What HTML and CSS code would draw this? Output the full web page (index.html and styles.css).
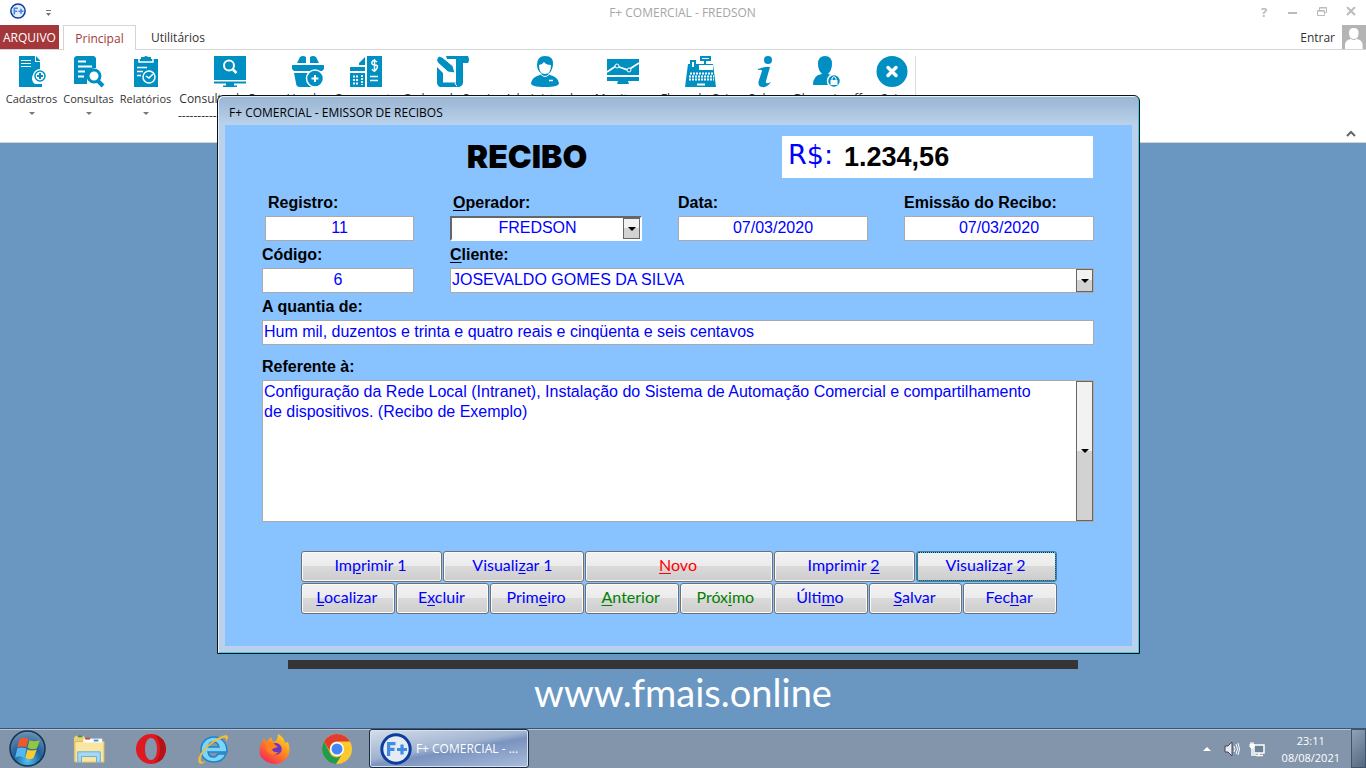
FILE: index.html
```html
<!DOCTYPE html>
<html lang="pt-BR">
<head>
<meta charset="utf-8">
<title>F+ COMERCIAL - FREDSON</title>
<link rel="stylesheet" href="styles.css">
</head>
<body>
<svg class="defs" aria-hidden="true">
  <symbol id="logo" viewBox="0 0 32 32">
    <circle cx="16" cy="16" r="14.2" fill="#e4ebf5" stroke="#0c3c9c" stroke-width="3"/>
    <g stroke="#3f8be6" fill="none" stroke-width="3.2"><path d="M8.6 23V9M7 10.6h8.5M7 16.4h7.5"/><path d="M17 16.5h10M22 11.5v10"/></g>
  </symbol>
</svg>
<header class="titlebar">
  <svg class="app-logo"><use href="#logo"/></svg>
  <svg class="quick" viewBox="0 0 7 8"><path d="M1 1.5h5" stroke="#777"/><path d="M1 4h5L3.500 7z" fill="#777"/></svg>
  <h1 class="app-title">F+ COMERCIAL - FREDSON</h1>
  <div class="win-controls">
    <button aria-label="Ajuda">?</button>
    <button aria-label="Minimizar"><svg viewBox="0 0 10 10"><path d="M0 6h9" stroke="#bbb" stroke-width="2"/></svg></button>
    <button aria-label="Restaurar"><svg viewBox="0 0 10 10" fill="none" stroke="#bbb"><path d="M.5 3.500h7v5h-7zM.5 4.200h7M2.500 3V.5h7v5H8M2.500 1h7"/></svg></button>
    <button aria-label="Fechar janela"><svg viewBox="0 0 10 10"><path d="M1 0l8 8M9 0L1 8" stroke="#bbb" stroke-width="2"/></svg></button>
  </div>
</header>
<nav class="tabs">
  <button class="tab file">ARQUIVO</button>
  <button class="tab current">Principal</button>
  <button class="tab">Utilitários</button>
  <button class="signin">Entrar<svg viewBox="0 0 24 24"><path d="M0 0h24v24H0z" fill="#b4b4b4"/><path d="M3 24v-4q0-5 6-6-2-3-2-6 0-5 4.800-5T16.600 8q0 3-2 6 6 1 6 6v4z" fill="#fff"/><path d="M9 13.500q3 2.500 5.600 0" fill="none" stroke="#b4b4b4"/></svg></button>
</nav>
<div class="ribbon">
  <button class="tool menu"><svg viewBox="0 0 32 32"><path d="M3 0h16v6h5v8.500a8 8 0 0 0-8 9q1 4 4 5h5V31H3z"/><path d="M20 0l4.500 5H20z"/><path d="M5 4.500h10M5 7.500h10M5 10.500h10" stroke="#fff"/><circle cx="24" cy="20" r="7" fill="#fff"/><circle cx="24" cy="20" r="5" fill="#fff" stroke="#008fc3" stroke-width="1.500"/><path d="M24 17v6M21 20h6" stroke="#008fc3" stroke-width="2"/><path d="M3 28h23v3H3z"/></svg>Cadastros</button>
  <button class="tool menu"><svg viewBox="0 0 32 32"><path d="M3 0h18l2 2v10a9 9 0 0 0-9 8v8H1V2z" /><path d="M5 5.500h8M5 10.500h14M5 15.500h7M5 20.500h6" stroke="#fff" stroke-width="2"/><circle cx="21" cy="20" r="6" fill="#fff" stroke="#008fc3" stroke-width="3"/><path d="M25 25l5 5" stroke="#008fc3" stroke-width="4"/></svg>Consultas</button>
  <button class="tool menu"><svg viewBox="0 0 32 32"><path d="M4 3h7V1h3a3 3 0 0 1 4 0h3v2h7v28H4z"/><path d="M9 3v3h14V3M7 11.500h10M7 15.500h6M7 19.500h4" stroke="#fff" stroke-width="1.500" fill="none"/><circle cx="19" cy="21" r="6" stroke="#fff" stroke-width="1.500"/><path d="M16 20l3 2 4-4" stroke="#fff" stroke-width="1.500" fill="none"/></svg>Relatórios</button>
  <button class="tool w-search"><svg viewBox="0 0 32 32"><path d="M0 0h32v24H0zM0 25.500h32v2H20v2h3V31H9v-1.500h3v-2H0z"/><path d="M0 24.500h32" stroke="#fff"/><circle cx="15" cy="9.500" r="5" fill="none" stroke="#fff" stroke-width="2"/><path d="M18.500 13l4 4" stroke="#fff" stroke-width="2.500"/></svg>Consulta de Preço</button>
  <button class="tool w-sale"><svg viewBox="0 0 32 32"><path d="M5 7l3-6q3-2 6 0v6zM18 7V1q3-2 6 0l3 6zM0 9h32v4l-2 2H2l-2-2zM2 17h27l-2 14H8q-4 0-4-4z"/><circle cx="23" cy="22.500" r="8.500" stroke="#fff" stroke-width="1.500"/><path d="M23 19v7M19.500 22.500h7" stroke="#fff" stroke-width="2"/></svg>Vendas</button>
  <button class="tool w-quote"><svg viewBox="0 0 32 32"><path d="M17 0h15v31H17zM15 1v8H9V7zM0 11h15v4H0zM0 17h15v14H0z"/><path d="M27 6q-4-3-5 0t3 3 1.500 4-4.500 0M24.500 3v13M20 20.500h8M20 24.500h8" fill="none" stroke="#fff" stroke-width="1.500"/><path d="M3 20.500h6M3 24h6M3 27.500h6M12 19v10" stroke="#fff" stroke-width="1.800" stroke-dasharray="2 1"/></svg>Orçamento</button>
  <button class="tool w-order"><svg viewBox="0 0 32 32"><path d="M9 0h22q2 4 0 7h-5v20q-1 4-5 4H3q-3-1-3-5V11l6 6v9h13V3H10z"/><path d="M0 2q2-3 5-1l11 9 2 7-7-1L1 7q-2-2-1-5z" stroke="#fff"/><path d="M6 26h12q0 3 2 4" fill="none" stroke="#fff"/></svg>Ordem de Serviço</button>
  <button class="tool w-admin"><svg viewBox="0 0 32 32"><path d="M8 9q0-9 8-9 9 0 8 9-1 7-5 9l2 1q8 2 9 8 0 4-14 4T2 27q1-6 9-8l2-1Q8 15 8 9z"/><path d="M10 9q0 9 6 9t6-9q-5 0-7-3-2 3-5 3z" fill="#fff"/><path d="M12 18.500q4 4 8 0" stroke="#fff" fill="none"/><path d="M20 24.500h4" stroke="#fff" stroke-width="1.500"/></svg>Administrador</button>
  <button class="tool w-monitor"><svg viewBox="0 0 32 32"><path d="M0 3h32v16H0zM0 21h32v4H21l1 3H10l1-3H0z"/><path d="M0 16l9-6 12 4L32 7" fill="none" stroke="#fff" stroke-width="1.700"/><circle cx="10" cy="10" r="2" stroke="#fff"/><circle cx="22" cy="14" r="2" stroke="#fff"/></svg>Monitorar</button>
  <button class="tool w-cash"><svg viewBox="0 0 32 32"><path d="M3 8h2V4h6v4h8V5h-4V0h11v5h-5v3h7l3 23H0z"/><path d="M7 6h2v5H7zM14 9h14v5H14zM17 2h7v1h-7z" fill="#fff"/><path d="M5 17.500h23M4 20.500h25M4 23.500h25" stroke="#fff" stroke-width="2" stroke-dasharray="2 1"/><path d="M12 28.500h8" stroke="#fff" stroke-width="2"/></svg>Fluxo de Caixa</button>
  <button class="tool w-about"><svg viewBox="0 0 32 32"><circle cx="19" cy="4" r="4"/><path d="M9 13q8-3 12-2l-4 14q-1 4 5 1-4 6-9 5-5-1-3-7l3-9q0-2-4-1z"/></svg>Sobre</button>
  <button class="tool w-backup"><svg viewBox="0 0 32 32"><path d="M13 0q7 0 7 8 0 6-4 10l7 2v9H1q0-10 9-11Q6 14 6 8q0-8 7-8z"/><circle cx="22" cy="25" r="6.500" stroke="#fff" stroke-width="1.500"/><path d="M18.500 24h7v5h-7z" fill="#fff"/><path d="M20 24v-2q2-3 4 0v2" fill="none" stroke="#fff"/></svg>Bloqueio off</button>
  <button class="tool w-exit"><svg viewBox="0 0 32 32"><circle cx="16" cy="15.500" r="15.500"/><path d="M12 11.500l8 8M20 11.500l-8 8" stroke="#fff" stroke-width="3.500" stroke-linecap="round"/></svg>Sair</button>
  <span class="group-name">----------</span>
  <button class="collapse" aria-label="Recolher faixa"><svg viewBox="0 0 10 7"><path d="M1 6l4-4 4 4" fill="none" stroke="#666" stroke-width="2"/></svg></button>
</div>
<main class="workspace">
  <hr class="rule">
  <p class="site">www.fmais.online</p>
</main>

<section class="dialog" role="dialog" aria-labelledby="dlg-title">
  <h2 class="dialog-title" id="dlg-title">F+ COMERCIAL - EMISSOR DE RECIBOS</h2>
  <form class="receipt">
    <div class="head">
      <h3>RECIBO</h3>
      <div class="amount"><label for="valor">R$:</label><input id="valor" value="1.234,56"></div>
    </div>
    <div class="fields">
      <div class="field inset"><label for="reg">Registro:</label><input id="reg" class="box center" value="11"></div>
      <div class="field"><label class="nudge" for="op"><u>O</u>perador:</label>
        <div class="combo sunken"><select id="op"><option>FREDSON</option></select><span class="arrow"></span></div></div>
      <div class="field"><label for="data">Data:</label><input id="data" class="box center" value="07/03/2020"></div>
      <div class="field"><label for="emi">Emissão do Recibo:</label><input id="emi" class="box center" value="07/03/2020"></div>
      <div class="field"><label for="cod">Código:</label><input id="cod" class="box center" value="6"></div>
      <div class="field wide"><label for="cli"><u>C</u>liente:</label>
        <div class="combo"><select id="cli"><option>JOSEVALDO GOMES DA SILVA</option></select><span class="arrow"></span></div></div>
      <div class="field full"><label for="qtd">A quantia de:</label><input id="qtd" class="box" value="Hum mil, duzentos e trinta e quatro reais e cinqüenta e seis centavos"></div>
      <div class="field full last"><label for="ref">Referente à:</label>
        <div class="memo"><textarea id="ref">Configuração da Rede Local (Intranet), Instalação do Sistema de Automação Comercial e compartilhamento de dispositivos. (Recibo de Exemplo)</textarea><button type="button" class="arrow" aria-label="Abrir lista"></button></div></div>
    </div>
    <div class="actions">
      <button type="button" class="w3">Im<u>p</u>rimir 1</button>
      <button type="button" class="w3">Visuali<u>z</u>ar 1</button>
      <button type="button" class="w4 red"><u>N</u>ovo</button>
      <button type="button" class="w3">Imprimir <u>2</u></button>
      <button type="button" class="w3 focused">Visualiza<u>r</u> 2</button>
      <button type="button"><u>L</u>ocalizar</button>
      <button type="button">E<u>x</u>cluir</button>
      <button type="button">Prim<u>e</u>iro</button>
      <button type="button" class="green"><u>A</u>nterior</button>
      <button type="button" class="green">Próx<u>i</u>mo</button>
      <button type="button">Últi<u>m</u>o</button>
      <button type="button"><u>S</u>alvar</button>
      <button type="button">Fec<u>h</u>ar</button>
    </div>
  </form>
</section>

<footer class="taskbar">
  <button class="start" aria-label="Iniciar"><svg viewBox="0 0 36 36">
    <defs><radialGradient id="orb" cx=".5" cy=".85" r=".9"><stop offset="0" stop-color="#4fc4f4"/><stop offset=".45" stop-color="#1d609c"/><stop offset="1" stop-color="#7d9ab8"/></radialGradient></defs>
    <circle cx="18" cy="18" r="17" fill="url(#orb)" stroke="#173654" stroke-width="1.500"/>
    <path d="M10 9q5-3 9 0l-2 8q-4-2-9 0z" fill="#f0592b"/><path d="M20 10q5 2 10 0l-3 8q-4 2-9-1z" fill="#93c83e"/><path d="M8 18q4-2 9 0l-2 9q-5-3-9 0z" fill="#57b6ee"/><path d="M18 19q4 2 9 0l-3 8q-4 3-8 0z" fill="#fdcb2f"/></svg></button>
  <button aria-label="Explorador"><svg viewBox="0 0 34 32"><path d="M1 4l2-2h8l2 2v3h18v22H1z" fill="#eecf74"/><path d="M2 8h31v22H2z" fill="#f9e6a0" stroke="#d8b85c"/><path d="M5 2.500h5" stroke="#2d9b4e" stroke-width="2"/><path d="M11 5h20v4H11z" fill="#fff"/><path d="M13 5h5" stroke="#d04040" stroke-width="2"/><path d="M22 7h5" stroke="#3f8ede" stroke-width="2"/><path d="M5 19h24v11h-4v-6H9v6H5z" fill="#a8d7f3" stroke="#5faedd"/></svg></button>
  <button aria-label="Opera"><svg viewBox="0 0 32 32"><path fill-rule="evenodd" d="M16 1a15 15 0 1 0 0 30 15 15 0 0 0 0-30zm0 4c4 0 6 5 6 11s-2 11-6 11-6-5-6-11 2-11 6-11z" fill="#df1920"/><path d="M20 2q10 2 11 14-1 12-11 14 5-5 5-14T20 2z" fill="#b51218"/></svg></button>
  <button aria-label="Internet Explorer"><svg viewBox="0 0 32 32"><path fill-rule="evenodd" d="M17 4C9 4 4 10 4 17s5 12 13 12c6 0 10-3 12-8h-8q-2 3-5 3-4 0-5-5h19C30 10 25 4 17 4zm-6 10q1-5 5.500-5t5.500 5z" fill="#7dd3f8" stroke="#1f83cb" stroke-width="1.500"/><path d="M2 30C-2 24 12 6 29 2q4 1 0 7 1-5-3-4C12 10 2 22 4 28q1 2 5 0-4 4-7 2z" fill="#f6bf2b"/></svg></button>
  <button aria-label="Firefox"><svg viewBox="0 0 32 32"><defs><linearGradient id="fox" x1=".9" y1="0" x2=".2" y2="1"><stop offset="0" stop-color="#ffe52b"/><stop offset=".45" stop-color="#ff8a1e"/><stop offset="1" stop-color="#f5225a"/></linearGradient></defs><path d="M2 11l3-6 2 4 5-5 2 5q5-1 5-8 6 3 7 9l3-1q3 8 0 14-5 8-13 8T2 24q-3-6 0-13z" fill="url(#fox)"/><path d="M11 13q4-5 9-2 4 3 2 8-4 5-9 1l-3-2 4-2z" fill="#6d34c8"/><path d="M8 9l6 1 5 4-6 2q1 4 7 3-7 6-12-1-2-5 0-9z" fill="#ff8120"/></svg></button>
  <button aria-label="Chrome"><svg viewBox="0 0 32 32"><circle cx="16" cy="16" r="15" fill="#fdc92e"/><path d="M3 8.500A15 15 0 0 1 29 8.500H16a7.500 7.500 0 0 0-7 10z" fill="#e13c30"/><path d="M3 8.500A15 15 0 0 0 15 31l7-11a7 7 0 0 1-13 0z" fill="#219a52"/><circle cx="16" cy="16" r="7" fill="#fff"/><circle cx="16" cy="16" r="5.500" fill="#4285f4"/></svg></button>
  <button class="running"><svg><use href="#logo"/></svg><span>F+ COMERCIAL - ...</span></button>
  <div class="tray">
    <svg class="up" viewBox="0 0 8 5"><path d="M0 5l4-4 4 4z" fill="#fff"/></svg>
    <svg class="ico" viewBox="0 0 16 16"><path d="M1 5h3l4-4v14l-4-4H1z" fill="#e9edf3" stroke="#445"/><path d="M10 5q2 3 0 6M12 3q3 5 0 10M14 2q3 6 0 12" fill="none" stroke="#fff"/></svg>
    <svg class="ico" viewBox="0 0 16 16"><path d="M5 4h10v8H5z" fill="#6f8197" stroke="#fff" stroke-width="1.500"/><path d="M7 14.500h7M10 12v2M3 7v7h4" fill="none" stroke="#fff" stroke-width="1.500"/><path d="M1 3h4v3q-2 3-4 0zM2 1v2M4 1v2" fill="#fff" stroke="#fff"/></svg>
    <time>23:11<br>08/08/2021</time>
  </div>
  <button class="peek" aria-label="Mostrar área de trabalho"></button>
</footer>
</body>
</html>
```
FILE: styles.css
```css
* { box-sizing: border-box; }
body {
  margin: 0;
  min-height: 100vh;
  display: flex;
  flex-direction: column;
  position: relative;
  background: #fff;
  font: 12px "Open Sans", "Noto Sans", sans-serif;
  color: #333;
}
h1, h2, h3, p { margin: 0; font-weight: normal; }
button, input, select, textarea { font: inherit; margin: 0; }
button { border: 0; background: none; padding: 0; color: inherit; }
svg { display: block; }
.defs { position: absolute; width: 0; height: 0; }

.titlebar { height: 25px; display: flex; align-items: center; padding: 0 10px; }
.app-logo { width: 16px; height: 16px; margin-bottom: 3px; }
.quick { width: 7px; height: 8px; margin-left: 19px; }
.app-title { flex: 1; text-align: center; font-size: 12px; color: #a6a6a6; padding-left: 54px; }
.win-controls { display: flex; gap: 19px; }
.win-controls button { width: 10px; display: flex; align-items: center; justify-content: center; color: #bbb; font-weight: 700; font-size: 13px; line-height: 20px; padding-bottom: 2px; }
.win-controls svg { width: 10px; height: 10px; }

.tabs { height: 25px; display: flex; border-bottom: 1px solid #d4d4d4; }
.tab { padding: 0 15px; font-size: 12px; }
.tab.file { width: 59px; padding: 0; background: #a4373a; color: #fff; margin-right: 4px; }
.tab.current { width: 73px; padding: 0; color: #a4373a; border: 1px solid #d4d4d4; border-bottom: 0; background: #fff; height: 25px; }
.signin { margin-left: auto; display: flex; align-items: center; gap: 7px; }
.signin svg { width: 24px; height: 24px; }

.ribbon { height: 93px; display: flex; align-items: flex-start; padding: 6px 0 0 3px; border-bottom: 1px solid #d4d4d4; position: relative; }
.tool { width: 57px; height: 75px; display: flex; flex-direction: column; align-items: center; gap: 2px; line-height: 18px; white-space: nowrap; font-size: 12px; }
.tool svg { width: 32px; height: 32px; fill: #008fc3; flex: none; }
.menu { font-size: 11px; }
.menu::after { content: ""; border: 3px solid transparent; border-top-color: #777; border-bottom: 0; margin-top: 2px; }
.w-search { width: 112px; }
.w-sale { width: 44px; }
.w-quote { width: 72px; }
.w-order { width: 102px; }
.w-admin { width: 82px; }
.w-monitor { width: 74px; }
.w-cash { width: 82px; }
.w-about { width: 46px; }
.w-backup { width: 80px; }
.w-exit { width: 48px; border-right: 1px solid #ddd; }
.group-name { position: absolute; left: 178px; top: 57px; width: 39px; overflow: hidden; }
.collapse { margin-left: auto; align-self: flex-end; padding: 0 10px 5px 0; }
.collapse svg { width: 10px; height: 7px; }

.workspace { flex: 1; background: #6997c2; display: flex; flex-direction: column; align-items: center; justify-content: flex-end; padding: 0 0 12px; }
.rule { width: 790px; max-width: 100%; height: 9px; border: 0; margin: 0; background: #363435; }
.site { font: 38px/47px Lato, sans-serif; color: #fff; }

.dialog {
  position: absolute;
  top: 95px;
  left: 217px;
  right: 226px;
  min-width: 880px;
  border: 1px solid #111;
  border-radius: 6px 6px 0 0;
  padding: 1px 7px 7px;
  background: linear-gradient(#99b4d1, #b9d1ea 28px);
  box-shadow: inset 1px 1px #e5f1fa, inset -1px -1px #35cfee;
}
.dialog-title { font-size: 12px; line-height: 28px; height: 28px; padding: 2px 4px 0; color: #000; }
.receipt { background: #89c3ff; padding: 11px 38px 32px 37px; font: 16px "Liberation Sans", Arial, sans-serif; color: #000; }
.head { display: grid; grid-template-columns: 1fr 311px; padding-right: 1px; margin-bottom: 15px; align-items: center; }
.head h3 { font: 900 32px/42px Inter, sans-serif; text-align: center; padding-left: 10px; }
.amount { background: #fff; height: 42px; display: flex; align-items: center; padding: 0 6px; gap: 11px; }
.amount label { font: 27px/38px "DejaVu Sans", Verdana, sans-serif; padding-bottom: 4px; color: #00f; }
.amount input { flex: 1; min-width: 0; border: 0; padding: 0; font: bold 27px/40px "Liberation Sans", Arial, sans-serif; color: #000; background: none; }

.fields { display: grid; grid-template-columns: 152fr 192fr 190fr 190fr; column-gap: 36px; row-gap: 4px; }
.field { display: flex; flex-direction: column; gap: 3px; min-width: 0; }
.field label { font-weight: bold; line-height: 20px; }
.inset { padding-left: 3px; }
.inset label, .nudge { padding-left: 3px; }
.wide { grid-column: span 3; }
.full { grid-column: 1 / -1; }
.last { padding-top: 8px; }
.box, .combo, .memo { width: 100%; height: 25px; border: 1px solid #aaa; background: #fff; color: #00f; }
.box { padding: 0 1px 2px; }
.center { text-align: center; }
.combo { position: relative; }
.combo select { appearance: none; width: 100%; height: 22px; border: 0; padding: 0 18px 2px 1px; background: none; color: #00f; outline: 0; }
.sunken { border: 2px solid; border-color: #666 #fff #fff #666; }
.sunken select { text-align-last: center; height: 21px; }
.arrow { border: 1px solid #666; background: linear-gradient(#f2f2f2 50%, #d2d2d2 50%); width: 17px; display: flex; align-items: center; justify-content: center; flex: none; }
.arrow::after { content: ""; border: 4px solid transparent; border-top-color: #000; border-bottom: 0; }
.combo .arrow { position: absolute; top: 0; right: 0; bottom: 0; pointer-events: none; }
.memo { height: 142px; display: flex; }
.memo textarea { flex: 1; border: 0; padding: 1px 24px 1px 1px; resize: none; color: #00f; background: none; line-height: 20px; outline: 0; }

.actions { display: grid; grid-template-columns: repeat(16, 1fr); gap: 1px; margin: 29px 37px 0 39px; font: 16px Lato, sans-serif; }
.actions button { grid-column: span 2; height: 31px; border: 1px solid #707070; border-radius: 3px; background: linear-gradient(#f2f2f2, #ebebeb 50%, #dadada 50%, #cdcdcd); box-shadow: inset 0 0 0 1px #fafafa; color: #00f; line-height: 20px; padding: 0 2px 3px 0; }
.actions .w3 { grid-column: span 3; }
.actions .w4 { grid-column: span 4; }
.actions .red { color: #f00; }
.actions .green { color: #008000; }
.actions .focused { border-color: #3c7fb1; box-shadow: inset 0 0 0 1px #46d3f5; outline: 1px dotted #222; outline-offset: -2px; }
u { text-underline-offset: 2px; }

.taskbar { height: 40px; display: flex; align-items: center; background: #8395ab; border-top: 1px solid #3c5673; box-shadow: inset 0 1px #b4c4d6; }
.taskbar > button { width: 62px; display: flex; justify-content: center; }
.taskbar svg { width: 32px; height: 32px; }
.taskbar > .start { width: 54px; margin-right: 4px; }
.taskbar .start svg { width: 37px; height: 37px; }
.taskbar > .running { width: 160px; height: 39px; margin-left: 1px; border: 1px solid #1c2c44; border-radius: 3px; align-items: center; gap: 4px; color: #fff; background: linear-gradient(170deg, #d5deea, #a0b3d0 45%, #7a93bf 55%, #a9bcdb); box-shadow: inset 0 0 0 1px #d8e2ee; }
.tray { margin-left: auto; display: flex; align-items: center; gap: 9px; color: #fff; }
.taskbar .up { width: 8px; height: 5px; margin-right: 4px; }
.taskbar .ico { width: 16px; height: 16px; }
.tray time { text-align: center; line-height: 17px; font-size: 11px; margin: 0 11px 0 8px; }
.taskbar > .peek { width: 15px; height: 39px; border: 1px solid #40546e; background: linear-gradient(135deg, #8fa1b6, #55687f); }
```
